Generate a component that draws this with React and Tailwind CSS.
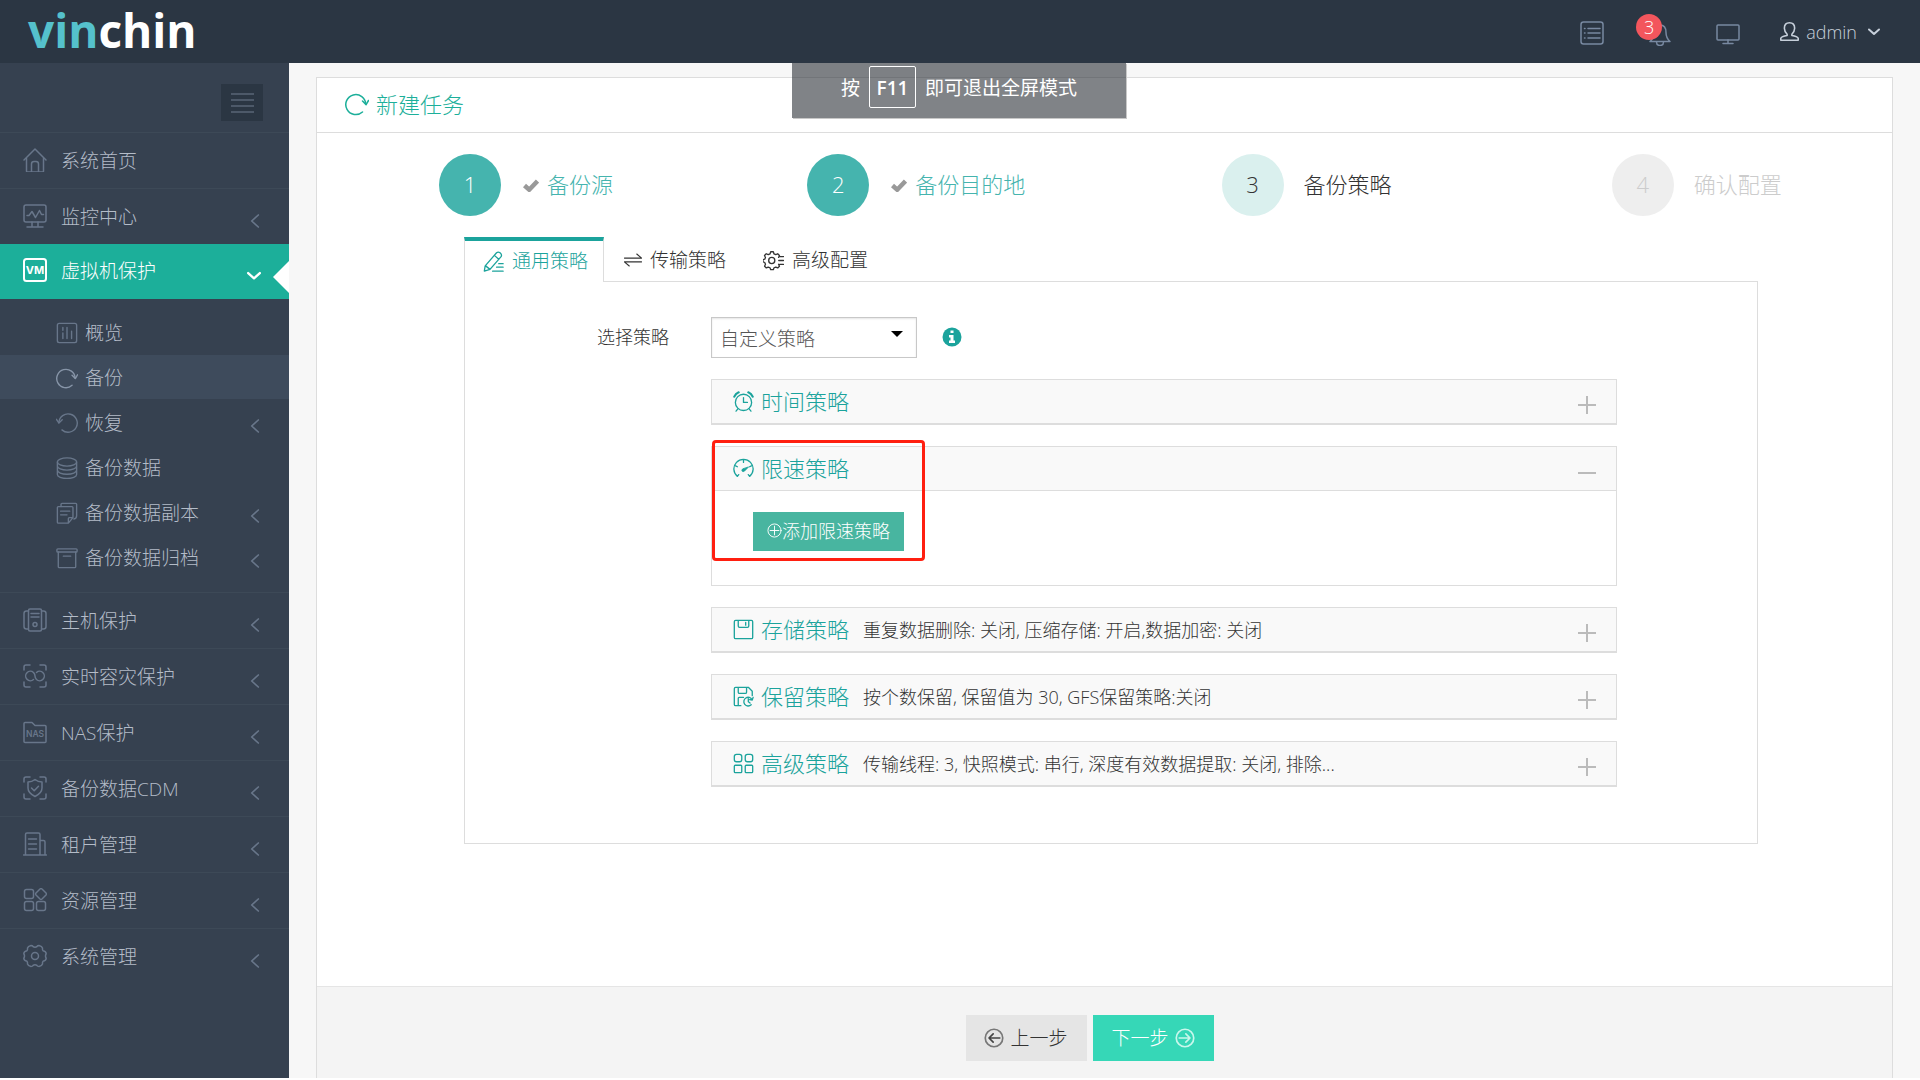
import { useState } from 'react';

// Line icons share one wrapper, paths are drawn on a 24 x 24 grid
const Icon = ({ className, stroke = 1.5, children }) => (
  <svg
    viewBox="0 0 24 24"
    className={className}
    fill="none"
    stroke="currentColor"
    strokeWidth={stroke}
    strokeLinecap="round"
    strokeLinejoin="round"
    aria-hidden="true"
  >
    {children}
  </svg>
);

const icons = {
  home: (
    <>
      <path d="M1 12 12 1l11 11" />
      <path d="M3.500 10.500V23q0 1 1 1h15q1 0 1-1V10.500" />
      <path d="M8.500 24v-8q0-2.500 2.500-2.500h2q2.500 0 2.500 2.500v8" />
    </>
  ),
  monitor: (
    <>
      <rect x="1" y="1" width="22" height="17" rx="2" />
      <path d="M4 11.500h2l3-4 3.500 6 4-7 2 4H20.500M9 18v4M15 18v4M4 23h16" />
    </>
  ),
  vm: (
    <>
      <rect x="1" y="1" width="22" height="22" rx="2.500" />
      <text x="12" y="16" textAnchor="middle" fontSize="11" fontWeight="700" fontFamily="Inter, sans-serif" fill="currentColor" stroke="none">VM</text>
    </>
  ),
  overview: (
    <>
      <rect x="1.500" y="1.500" width="21" height="21" rx="2" />
      <path d="M7.500 6v3M7.500 12v6M12 6v12M17 10v8" />
    </>
  ),
  backup: (
    <>
      <path d="M20.800 12.300A10 10 0 1 0 17.500 20" />
      <path d="M17.500 9l3.600 3.600L23.500 8.500" />
    </>
  ),
  restore: (
    <>
      <path d="M3.200 11.700A10 10 0 1 1 6.500 19.500" />
      <path d="M.500 8l2.700 4 3.600-3.500" />
    </>
  ),
  database: (
    <>
      <ellipse cx="12" cy="5.500" rx="10.500" ry="4.500" />
      <path d="M1.500 5.500v4.300c0 2.500 4.700 4.500 10.500 4.500s10.500-2 10.500-4.500V5.500M1.500 9.800v4.500c0 2.500 4.700 4.500 10.500 4.500s10.500-2 10.500-4.500V9.800M1.500 14.500v4.500c0 2.500 4.700 4.500 10.500 4.500s10.500-2 10.500-4.500v-4.500" />
    </>
  ),
  copy: (
    <>
      <path d="M5.500 5V2.500q0-1 1-1h15q1 0 1 1V15q0 3-3 3.500" />
      <path d="M2.500 5H17.500q1 0 1 1v11l-5 6h-11q-1 0-1-1V6q0-1 1-1zM18.500 17h-4q-1 0-1 1v5M5 10h10M5 14h7" />
    </>
  ),
  archive: (
    <>
      <rect x="1" y="2" width="22" height="3.500" rx="1" />
      <path d="M2.500 5.500v16q0 1 1 1h17q1 0 1-1v-16M8 10h8" />
    </>
  ),
  host: (
    <>
      <rect x="5.500" y="1" width="13" height="22" rx="1.500" />
      <path d="M5.500 3H3.500Q1 3 1 5.500v13Q1 21 3.500 21h2M18.500 3h2Q23 3 23 5.500v13q0 2.500-2.500 2.500h-2M8 5.500h8M8 9h8" />
      <circle cx="12" cy="16.500" r="2" />
    </>
  ),
  realtime: (
    <>
      <path d="M1 6V3q0-2 2-2h4M17 1h4q2 0 2 2v3M1 18v3q0 2 2 2h4M17 23h4q2 0 2-2v-3" />
      <path d="M10.500 15.500A4.700 4.700 0 1 1 10.500 8.500Q12 10 12 12q0 2 1.500 3.500a4.700 4.700 0 1 0 0-7" />
    </>
  ),
  nas: (
    <>
      <path d="M1 3.500q0-1 1-1h7l3 3h10q1 0 1 1v15q0 1-1 1H2q-1 0-1-1z" />
      <text x="12" y="17" textAnchor="middle" fontSize="8.500" fontWeight="600" fontFamily="Inter, sans-serif" fill="currentColor" stroke="none">NAS</text>
    </>
  ),
  cdm: (
    <>
      <path d="M1 6V3q0-2 2-2h4M17 1h4q2 0 2 2v3M1 18v3q0 2 2 2h4M17 23h4q2 0 2-2v-3" />
      <path d="M12 3.500Q15 6 19 6v6q0 5-7 8.500Q5 17 5 12V6q4 0 7-2.500zM8.500 12l2.700 2.700 4.300-4.500" />
    </>
  ),
  tenant: (
    <>
      <path d="M0.500 23h23M2.500 23V2.500Q2.500 1 4 1h11.500Q17 1 17 2.500V23M17 8.500h3.500Q22 8.500 22 10v13M5.500 7h8M5.500 12h8M5.500 17h8" />
    </>
  ),
  resource: (
    <>
      <rect x="1.500" y="1.500" width="9" height="9" rx="2" />
      <rect x="1.500" y="13.500" width="9" height="9" rx="2" />
      <rect x="13.500" y="13.500" width="9" height="9" rx="2" />
      <path d="M17 1q1-.8 2 0l4 4q.8 1 0 2l-4 4q-1 .8-2 0l-4-4q-.8-1 0-2z" />
    </>
  ),
  settings: (
    <>
      <circle cx="12" cy="12" r="3.500" />
      <path d="M8 1.500q1.500 0 2 1 2 1.300 4 0 .5-1 2-1 3 .8 3.500 2.500-.3 1.500.5 2.700 3 .5 3.200 3-.7 1-.7 2.300t.7 2.300q-.2 2.500-3.200 3-.8 1.200-.5 2.700-.5 1.700-3.500 2.500-1.500 0-2-1-2-1.300-4 0-.5 1-2 1-3-.8-3.500-2.500.3-1.500-.5-2.700-3-.5-3.200-3 .7-1 .7-2.300t-.7-2.300q.2-2.500 3.200-3 .8-1.200.5-2.700Q5 2.300 8 1.500z" />
    </>
  ),
  list: (
    <>
      <rect x="1" y="1" width="22" height="22" rx="2.500" />
      <path d="M4.500 7.500h.5M4.500 12h.5M4.500 17h.5M8 7.500h12M8 12h12M8 17h12" />
    </>
  ),
  bell: (
    <>
      <path d="M2 19.500h20Q18 16 18 10.500 18 3 12 3T6 10.500Q6 16 2 19.500zM8.500 20q0 3.500 3.500 3.500t3.500-3.500M12 3V1.500" />
    </>
  ),
  screen: (
    <>
      <rect x="1" y="3" width="22" height="15" rx="1" />
      <path d="M12 18v3.500M7 21.500h10" />
    </>
  ),
  user: (
    <>
      <path d="M9 15.500Q5.500 12 5.500 8 5.500 1 12 1t6.500 7q0 4-3.500 7.500v1.500q7 1 8 3.500v2.500H1v-2.500q1-2.500 8-3.500z" />
    </>
  ),
  edit: (
    <>
      <path d="M2.500 17 15.500 2q1.800-1.500 4 0 2.500 2 1.200 4.500L8 21l-6.500 2zM13 5l5 4.500M3 17l5 4M18 14.500h5M15.500 18.500H23M11 23h12" />
    </>
  ),
  transfer: <path d="M.500 9.500h23L17 4M23.500 14.500H.500L7 20" />,
  advanced: (
    <>
      <circle cx="10" cy="12" r="3.500" />
      <path d="M8 4.500 8.800 2h3l.8 2.500 2 .8 2.200-1 2 2-1 2.200M8 4.500l-2 .8-2.300-1-2 2 1.100 2.300-.8 1.900L0 11v2.500l2 .8.800 2-1 2.200 2 2 2.200-1 2 .8.800 2.200h3l.8-2.200 2-.8 2.200 1 2-2-1-2.200M19 7.500h4.500M18 12h5.500M19 16.500h4.500" />
    </>
  ),
  clock: (
    <>
      <circle cx="12" cy="13" r="9.300" />
      <path d="M12 7.500V13h4.500M5.500 20.500 3.500 23M18.500 20.500l2 2.500" />
      <path strokeWidth="2.500" d="M1.500 6.500Q3 3 6.500 1.500M22.500 6.500Q21 3 17.500 1.500" />
    </>
  ),
  speed: (
    <>
      <path d="M5 21a11 11 0 1 1 14 0M12 2.500V5M3 9l2 1M21 9l-2 1M5 21l1.500-2M19 21l-1.500-2" />
      <path fill="currentColor" strokeWidth="1" d="M17.500 10.500 13 15q-1.500 1-2.500 0t.3-2.300z" />
    </>
  ),
  storage: (
    <>
      <path d="M3 1.500h18q1.500 0 1.500 1.500v18q0 1.500-1.500 1.500H3q-1.500 0-1.500-1.500V3q0-1.500 1.500-1.500zM6 1.500V8q0 1.500 1.500 1.500h9Q18 9.500 18 8V1.500M14.500 4v3" />
    </>
  ),
  retain: (
    <>
      <path d="M9 22.500H3q-1.500 0-1.500-1.500V3q0-1.500 1.500-1.500h14.500L22 6v5M6 1.500V7q0 1.500 1.500 1.500H14q1.500 0 1.500-1.500V1.500M6 22v-8q0-1 1-1h5" />
      <path d="M21.800 15.500a5 5 0 1 0-1 6M17.500 14.500V18l2 1.500M23 13l-1 3-3-.500" />
    </>
  ),
  grid: (
    <>
      <rect x="1.500" y="1.500" width="8.500" height="8.500" rx="2.500" />
      <rect x="14" y="1.500" width="8.500" height="8.500" rx="2.500" />
      <rect x="1.500" y="14" width="8.500" height="8.500" rx="1" />
      <rect x="14" y="14" width="8.500" height="8.500" rx="1" />
    </>
  ),
};

const menu = [
  { label: '系统首页', icon: 'home' },
  { label: '监控中心', icon: 'monitor', arrow: true },
  {
    label: '虚拟机保护',
    icon: 'vm',
    open: true,
    items: [
      { label: '概览', icon: 'overview' },
      { label: '备份', icon: 'backup', current: true },
      { label: '恢复', icon: 'restore', arrow: true },
      { label: '备份数据', icon: 'database' },
      { label: '备份数据副本', icon: 'copy', arrow: true },
      { label: '备份数据归档', icon: 'archive', arrow: true },
    ],
  },
  { label: '主机保护', icon: 'host', arrow: true },
  { label: '实时容灾保护', icon: 'realtime', arrow: true },
  { label: 'NAS保护', icon: 'nas', arrow: true },
  { label: '备份数据CDM', icon: 'cdm', arrow: true },
  { label: '租户管理', icon: 'tenant', arrow: true },
  { label: '资源管理', icon: 'resource', arrow: true },
  { label: '系统管理', icon: 'settings', arrow: true },
];

const steps = [
  { label: '备份源', state: 'done' },
  { label: '备份目的地', state: 'done' },
  { label: '备份策略', state: 'active' },
  { label: '确认配置', state: 'todo' },
];

const circleStyle = {
  done: 'bg-[#45b4ae] text-white',
  active: 'bg-[#daf0ee] text-[#333333]',
  todo: 'bg-[#eeeeee] text-[#cccccc]',
};

const stepText = {
  done: 'text-[#45b4ae]',
  active: 'text-[#333333]',
  todo: 'text-[#cccccc]',
};

const tabs = [
  { label: '通用策略', icon: 'edit' },
  { label: '传输策略', icon: 'transfer' },
  { label: '高级配置', icon: 'advanced' },
];

const ChevronLeft = () => (
  <Icon className="mt-1.5 h-4 w-4 text-[#68768a]" stroke={2.5}>
    <path d="M17 3 7 12l10 9" />
  </Icon>
);

const Header = () => (
  <header className="flex h-[63px] items-center justify-between bg-[#2b3643] pl-7 pr-10">
    <a href="#" className="pb-1 font-['Open_Sans',sans-serif] text-[46px] leading-none font-bold text-white">
      <span className="text-[#55c1cc]">vin</span>chin
    </a>
    <div className="flex items-center text-[#7889a1]">
      <button aria-label="任务列表"><Icon className="mt-0.5 h-6 w-6">{icons.list}</Icon></button>
      <button aria-label="通知" className="relative ml-10 pl-1">
        <Icon className="mt-1 h-6 w-6">{icons.bell}</Icon>
        <span className="absolute -top-1 -left-2 flex h-[26px] w-[26px] items-center justify-center rounded-full bg-[#f3565d] text-lg text-white">
          3
        </span>
      </button>
      <button aria-label="大屏" className="ml-10 pl-1"><Icon className="mt-1 h-6 w-6">{icons.screen}</Icon></button>
      <button className="ml-10 flex items-center gap-[7px] text-lg text-[#c6cfda]">
        <Icon className="h-[19px] w-[19px]" stroke={2}>{icons.user}</Icon>
        admin
        <Icon className="ml-1 h-3 w-3" stroke={4}><path d="M2 7l10 9 10-9" /></Icon>
      </button>
    </div>
  </header>
);

const Sidebar = () => (
  <nav className="w-[289px] shrink-0 bg-[#364150] text-[19px] text-[#b4bcc8]">
    <div className="flex h-[69px] items-end justify-end pr-[26px] pb-[11px]">
      <button aria-label="收起菜单" className="flex h-[37px] w-[42px] flex-col items-center justify-center gap-1 bg-[#2b3643]">
        <span className="h-0.5 w-[23px] bg-[#4d5969]" />
        <span className="h-0.5 w-[23px] bg-[#4d5969]" />
        <span className="h-0.5 w-[23px] bg-[#4d5969]" />
        <span className="h-0.5 w-[23px] bg-[#4d5969]" />
      </button>
    </div>
    <ul>
      {menu.map((item) => (
        <li key={item.label}>
          <a
            href="#"
            className={
              item.open
                ? 'relative flex h-[55px] items-center bg-[#1caf9a] pl-[23px] pr-5 text-white'
                : 'flex h-14 items-center border-t border-[#3d4957] pt-0.5 pl-[23px] pr-[26px]'
            }
          >
            <Icon className={item.open ? 'mb-1 h-6 w-6' : 'mb-1 h-6 w-6 text-[#68768a]'} stroke={item.open ? 2 : 1.5}>
              {icons[item.icon]}
            </Icon>
            <span className="ml-3.5 flex-1">{item.label}</span>
            {item.arrow && <ChevronLeft />}
            {item.open && (
              <>
                <Icon className="mt-2 mr-2 h-3.5 w-3.5" stroke={4}><path d="M2 7l10 9 10-9" /></Icon>
                <svg viewBox="0 0 16 32" className="absolute right-0 bottom-1.5 h-8 w-4" aria-hidden="true">
                  <path d="M16 0v32L0 16z" fill="#ffffff" />
                </svg>
              </>
            )}
          </a>
          {item.items && (
            <ul className="flex flex-col gap-px pt-[11px] pb-[13px]">
              {item.items.map((sub) => (
                <li key={sub.label}>
                  <a
                    href="#"
                    className={
                      sub.current
                        ? 'flex h-11 items-center bg-[#3e4b5c] pt-0.5 pl-14 pr-[26px]'
                        : 'flex h-11 items-center pt-0.5 pl-14 pr-[26px]'
                    }
                  >
                    <Icon className={sub.current ? 'h-[22px] w-[22px] text-[#8795a8]' : 'h-[22px] w-[22px] text-[#68768a]'}>
                      {icons[sub.icon]}
                    </Icon>
                    <span className="ml-[7px] flex-1">{sub.label}</span>
                    {sub.arrow && <ChevronLeft />}
                  </a>
                </li>
              ))}
            </ul>
          )}
        </li>
      ))}
    </ul>
  </nav>
);

const Steps = () => (
  <ol className="flex pt-[21px] pl-3.5 text-[22px]">
    {steps.map((step, i) => (
      <li key={step.label} className="flex flex-1 items-center justify-center">
        <span className={`flex h-[62px] w-[62px] items-center justify-center rounded-full pb-0.5 ${circleStyle[step.state]}`}>
          {i + 1}
        </span>
        {step.state === 'done' && (
          <svg viewBox="0 0 16 13" className="ml-[22px] -mr-3 h-[13px] w-4" aria-hidden="true">
            <path d="M1.500 6.500l4.700 4.200L14.500 2" fill="none" stroke="#999999" strokeWidth="4.500" />
          </svg>
        )}
        <span className={`ml-5 pb-0.5 ${stepText[step.state]}`}>{step.label}</span>
      </li>
    ))}
  </ol>
);

const Policy = ({ icon, title, summary, children }) => {
  const open = Boolean(children);
  return (
    <section className={open ? 'border border-[#dddddd]' : 'border border-b-2 border-[#dddddd]'}>
      <button
        aria-expanded={open}
        className={
          open
            ? 'flex h-11 w-full items-center border-b border-[#dddddd] bg-[#f9f9f9] pl-[21px] pr-5 text-left'
            : 'flex h-[43px] w-full items-center bg-[#f9f9f9] pl-[21px] pr-5 text-left'
        }
      >
        <Icon className="h-[21px] w-[21px] text-[#1ba39c]">{icons[icon]}</Icon>
        <span className="ml-[7px] text-[22px] text-[#1ba39c]">{title}</span>
        <span className="ml-3.5 flex-1 truncate text-lg text-[#333333]">{summary}</span>
        <svg viewBox="0 0 18 18" className="mt-1.5 h-[18px] w-[18px]" stroke="#bbbbbb" strokeWidth="2" aria-hidden="true">
          <path d={open ? 'M0 10h18' : 'M0 9h18M9 0v18'} />
        </svg>
      </button>
      {children}
    </section>
  );
};

const General = () => {
  const [policy, setPolicy] = useState('自定义策略');

  return (
    <div className="border border-t-0 border-[#dddddd] pt-[35px] pb-14 pl-[132px] pr-[140px]">
      <div className="flex items-center">
        <label htmlFor="policy" className="w-[114px] pb-0.5 text-lg text-[#333333]">选择策略</label>
        <div className="relative">
          <select
            id="policy"
            value={policy}
            onChange={(e) => setPolicy(e.target.value)}
            className="h-[41px] w-[206px] appearance-none border border-[#c8c8c8] bg-white pt-1 pl-2 text-[19px] text-[#555555] shadow-[inset_0_1px_2px_#e5e5e5]"
          >
            <option>自定义策略</option>
          </select>
          <svg viewBox="0 0 12 6" className="pointer-events-none absolute top-3.5 right-3.5 h-1.5 w-3" aria-hidden="true">
            <path d="M0 0h12L6 6z" fill="#000000" />
          </svg>
        </div>
        <svg viewBox="0 0 20 20" className="mb-0.5 ml-[25px] h-5 w-5" aria-hidden="true">
          <circle cx="10" cy="10" r="9.500" fill="#1ba39c" />
          <path d="M8.500 3.500h3v2.500h-3zM7 8h4.500v5.500H13V16H7v-2.500h1.500v-3H7z" fill="#ffffff" />
        </svg>
      </div>

      <div className="mt-[21px] ml-[114px] flex flex-col gap-[21px]">
        <Policy icon="clock" title="时间策略" />
        <div className="relative">
          <Policy icon="speed" title="限速策略">
            <div className="px-[41px] pt-[21px] pb-[34px]">
              <button className="flex h-[39px] items-center bg-[#48b5a0] px-3.5 pb-0.5 text-lg text-white">
                <Icon className="h-[15px] w-[15px]"><circle cx="12" cy="12" r="10.500" /><path d="M12 5v14M5 12h14" /></Icon>
                添加限速策略
              </button>
            </div>
          </Policy>
          <div className="pointer-events-none absolute -top-1.5 left-px h-[121px] w-[213px] rounded-sm border-3 border-[#ff1f10]" />
        </div>
        <Policy icon="storage" title="存储策略" summary="重复数据删除: 关闭, 压缩存储: 开启,数据加密: 关闭" />
        <Policy icon="retain" title="保留策略" summary="按个数保留, 保留值为 30, GFS保留策略:关闭" />
        <Policy icon="grid" title="高级策略" summary="传输线程: 3, 快照模式: 串行, 深度有效数据提取: 关闭, 排除..." />
      </div>
    </div>
  );
};

const App = () => (
  <div className="relative flex min-h-screen flex-col bg-white pb-0.5 font-['Open_Sans','Noto_Sans_CJK_SC',sans-serif] font-light">
    <Header />
    <div className="flex flex-1">
      <Sidebar />
      <main className="flex flex-1 flex-col bg-[#f7f7f7] pt-3.5 pl-[27px] pr-[27px]">
        <div className="flex flex-1 flex-col border border-b-0 border-[#dddddd] bg-white">
          <h1 className="flex h-[55px] items-center gap-[7px] border-b border-[#dddddd] pb-0.5 pl-7 text-[22px] text-[#1caf9a]">
            <Icon className="h-6 w-6">{icons.backup}</Icon>
            新建任务
          </h1>
          <div className="flex-1 pb-10">
            <Steps />
            <div className="mt-[21px] ml-[147px] mr-[134px]">
              <div role="tablist" className="flex h-[45px] text-[19px]">
                {tabs.map((tab, i) => (
                  <button
                    key={tab.label}
                    role="tab"
                    aria-selected={i === 0}
                    className={
                      i === 0
                        ? 'flex w-[140px] items-center border-x border-t-4 border-x-[#dddddd] border-t-[#1ba39c] pl-[18px] text-[#1ba39c]'
                        : 'flex items-center border-b border-[#dddddd] pt-0.5 pl-5 pr-[17px] text-[#333333]'
                    }
                  >
                    <Icon className={i === 1 ? 'h-[18px] w-[18px]' : 'h-[21px] w-[21px]'}>{icons[tab.icon]}</Icon>
                    <span className="ml-2">{tab.label}</span>
                  </button>
                ))}
                <div className="flex-1 border-b border-[#dddddd]" />
              </div>
              <General />
            </div>
          </div>
          <div className="flex h-[92px] items-start justify-center gap-1.5 border-t border-[#e5e5e5] bg-[#f4f4f4] pt-7 pr-[30px] text-[19px]">
            <button className="flex h-[46px] w-[121px] items-center justify-center gap-1.5 bg-[#e5e5e5] text-[#333333]">
              <Icon className="h-5 w-5 text-[#777777]" stroke={2}>
                <circle cx="12" cy="12" r="10.500" />
                <path stroke="#444444" d="M19 12H6M11 7l-5 5 5 5" />
              </Icon>
              上一步
            </button>
            <button className="flex h-[46px] w-[121px] items-center justify-center gap-1.5 bg-[#36d7b7] text-white">
              下一步
              <Icon className="h-5 w-5 text-[#c9f7ec]" stroke={2}>
                <circle cx="12" cy="12" r="10.500" />
                <path d="M5 12h13M13 7l5 5-5 5" />
              </Icon>
            </button>
          </div>
        </div>
      </main>
    </div>

    <div className="absolute top-[63px] left-0 flex w-full justify-center pr-0.5">
      <div className="flex h-[55px] w-[334px] items-start justify-center gap-[9px] bg-[#2c3037]/60 pt-[3px] text-[19px] font-normal text-white shadow-[1px_1px_0_#c8c8c8]">
        <span className="flex h-[42px] items-center pt-0.5">按</span>
        <kbd className="flex h-[42px] w-[47px] items-center justify-center rounded-xs border border-white pt-0.5 font-['Open_Sans',sans-serif] font-semibold">F11</kbd>
        <span className="flex h-[42px] items-center pt-0.5">即可退出全屏模式</span>
      </div>
    </div>
  </div>
);

export default App;
